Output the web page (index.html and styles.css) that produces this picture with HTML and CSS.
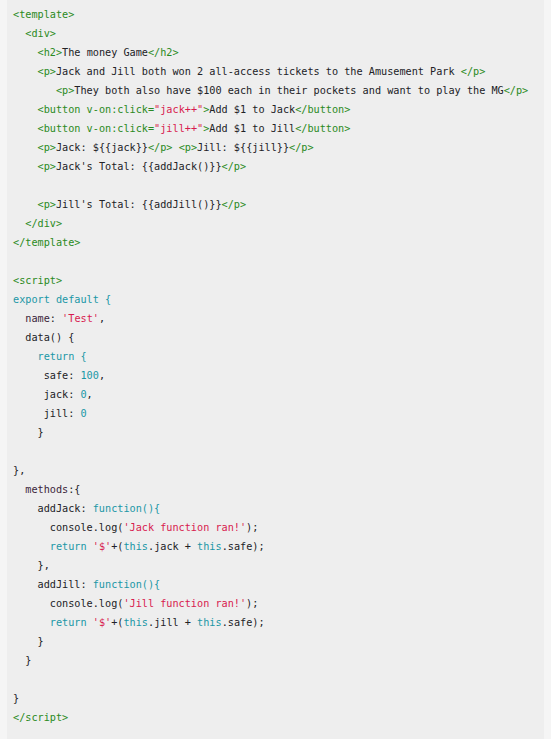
FILE: index.html
```html
<!DOCTYPE html>
<html>
<head>
<meta charset="utf-8">
<link rel="stylesheet" href="styles.css">
</head>
<body>
<pre class="code"><span class="t">&lt;template&gt;</span>
  <span class="t">&lt;div&gt;</span>
    <span class="t">&lt;h2&gt;</span>The money Game<span class="t">&lt;/h2&gt;</span>
    <span class="t">&lt;p&gt;</span>Jack and Jill both won 2 all-access tickets to the Amusement Park <span class="t">&lt;/p&gt;</span>
       <span class="t">&lt;p&gt;</span>They both also have $100 each in their pockets and want to play the MG<span class="t">&lt;/p&gt;</span>
    <span class="t">&lt;button v-on:click=</span><span class="s">"jack++"</span><span class="t">&gt;</span>Add $1 to Jack<span class="t">&lt;/button&gt;</span>
    <span class="t">&lt;button v-on:click=</span><span class="s">"jill++"</span><span class="t">&gt;</span>Add $1 to Jill<span class="t">&lt;/button&gt;</span>
    <span class="t">&lt;p&gt;</span>Jack: ${{jack}}<span class="t">&lt;/p&gt;</span> <span class="t">&lt;p&gt;</span>Jill: ${{jill}}<span class="t">&lt;/p&gt;</span>
    <span class="t">&lt;p&gt;</span>Jack's Total: {{addJack()}}<span class="t">&lt;/p&gt;</span>

    <span class="t">&lt;p&gt;</span>Jill's Total: {{addJill()}}<span class="t">&lt;/p&gt;</span>
  <span class="t">&lt;/div&gt;</span>
<span class="t">&lt;/template&gt;</span>

<span class="t">&lt;script&gt;</span>
<span class="k">export default {</span>
  <span class="p">name</span>: <span class="s">'Test'</span>,
  data() {
    <span class="k">return {</span>
     safe: <span class="k">100</span>,
     jack: <span class="k">0</span>,
     jill: <span class="k">0</span>
    }

},
  <span class="p">methods</span>:{
    addJack: <span class="k">function(){</span>
      console.log(<span class="s">'Jack function ran!'</span>);
      <span class="k">return</span> <span class="s">'$'</span>+(<span class="k">this</span>.jack + <span class="k">this</span>.safe);
    },
    addJill: <span class="k">function(){</span>
      console.log(<span class="s">'Jill function ran!'</span>);
      <span class="k">return</span> <span class="s">'$'</span>+(<span class="k">this</span>.jill + <span class="k">this</span>.safe);
    }
  }

}
<span class="t">&lt;/script&gt;</span>
</pre>
</body>
</html>
```
FILE: styles.css
```css
html, body {
  margin: 0;
  padding: 0;
  background: #f5f5f5;
  height: 100%;
}
body {
  padding: 0 7px 0 7px;
  box-sizing: border-box;
}
.code {
  margin: 0;
  min-height: 739px;
  box-sizing: border-box;
  background: #eeeeee;
  padding: 5px 6px;
  font-family: "DejaVu Sans Mono", monospace;
  font-size: 10.2px;
  line-height: 19px;
  color: #222226;
  white-space: pre;
  overflow: hidden;
}
.t { color: #2a8a22; }
.s { color: #d81b4f; }
.k { color: #1a97a6; }
.p { color: #3a1f3a; }
```
